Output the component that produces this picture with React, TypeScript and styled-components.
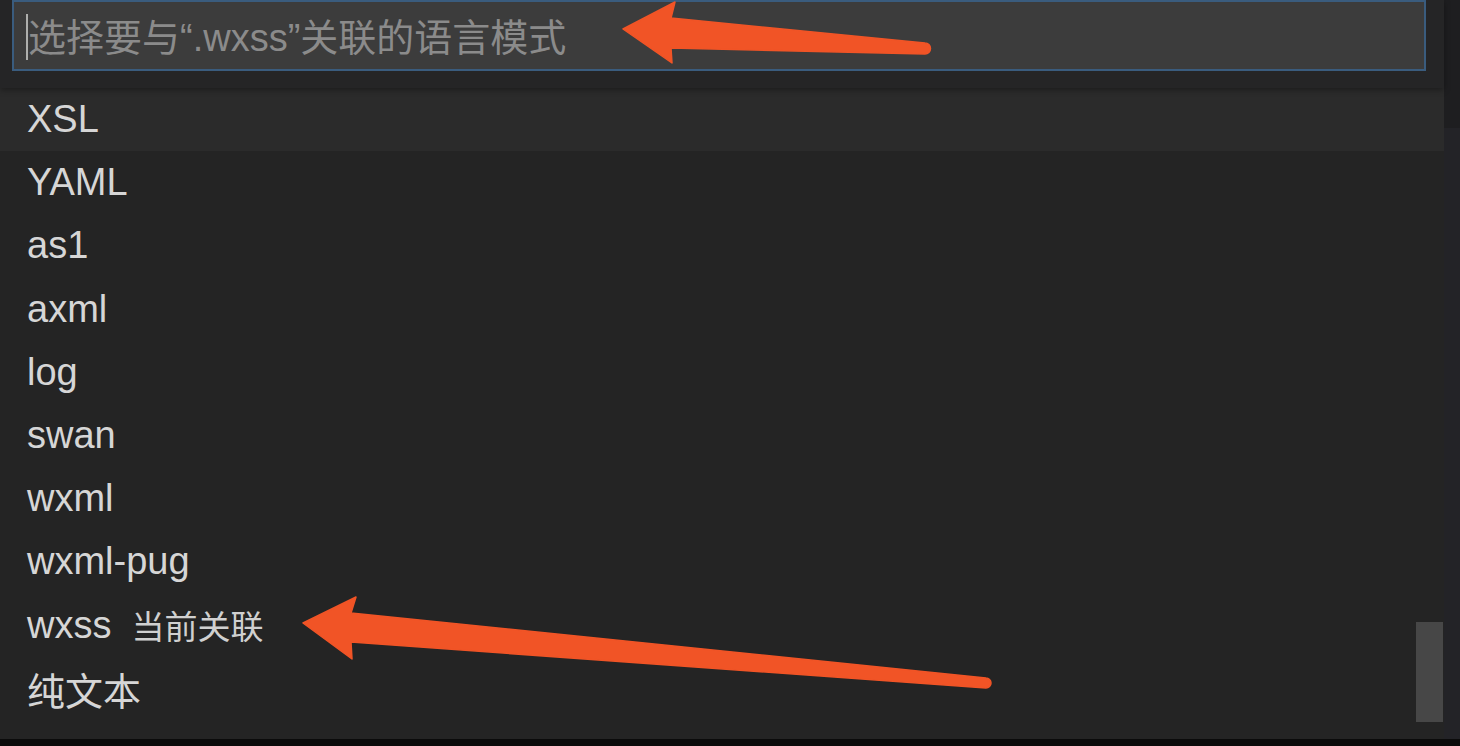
import React from 'react';
import styled, { createGlobalStyle } from 'styled-components';

const GlobalStyle = createGlobalStyle`
  html, body {
    margin: 0;
    padding: 0;
    background: #0b0b0b;
    overflow: hidden;
  }
`;

const Screen = styled.div`
  position: relative;
  width: 1460px;
  height: 746px;
  display: flex;
  flex-direction: column;
  font-family: "Liberation Sans", "Noto Sans CJK SC", sans-serif;
  background: #0b0b0b;
`;

const Main = styled.div`
  display: flex;
  flex-direction: row;
  height: 739px;
`;

const Widget = styled.div`
  position: relative;
  width: 1444px;
  display: flex;
  flex-direction: column;
  background: #242424;
`;

const SideStrip = styled.div`
  flex: 1;
  background: linear-gradient(#1e1e20 0, #1e1e20 128px, #232327 128px);
`;

const Header = styled.div`
  height: 88px;
  box-sizing: border-box;
  padding: 0 18px 0 12px;
  background: #252526;
  box-shadow: 0 2px 6px rgba(0, 0, 0, 0.35);
  position: relative;
  z-index: 1;
`;

const InputBox = styled.div`
  height: 71px;
  box-sizing: border-box;
  border: 2px solid #3a5c7e;
  background: #3c3c3c;
  display: flex;
  align-items: center;
  padding-left: 12px;
`;

const Caret = styled.span`
  display: inline-block;
  width: 2px;
  height: 46px;
  background: #aeafad;
  margin-top: 2px;
`;

const Placeholder = styled.span`
  color: #8b8b8b;
  font-size: 38px;
  line-height: 1;
  margin-top: 4px;
  white-space: nowrap;
`;

const List = styled.div`
  flex: 1;
  display: flex;
  flex-direction: column;
`;

const Row = styled.div<{ $active?: boolean }>`
  height: 63.2px;
  flex: none;
  display: flex;
  align-items: center;
  padding-left: 27px;
  background: ${(p) => (p.$active ? '#2b2b2b' : 'transparent')};
  color: #d6d6d6;
  font-size: 38px;
  white-space: nowrap;
`;

const Description = styled.span`
  margin-left: 20px;
  font-size: 33px;
  color: #d0d0d0;
`;

const ScrollThumb = styled.div`
  position: absolute;
  right: 1px;
  top: 622px;
  width: 27px;
  height: 100px;
  background: #474747;
`;

const BottomStrip = styled.div`
  flex: 1;
  background: #0b0b0b;
`;

const Annotations = styled.svg`
  position: absolute;
  left: 0;
  top: 0;
  z-index: 2;
  pointer-events: none;
`;

const ARROW = '#f15426';

const languages = [
  { name: 'XSL', active: true },
  { name: 'YAML' },
  { name: 'as1' },
  { name: 'axml' },
  { name: 'log' },
  { name: 'swan' },
  { name: 'wxml' },
  { name: 'wxml-pug' },
  { name: 'wxss', description: '当前关联' },
  { name: '纯文本' },
];

const App: React.FC = () => (
  <Screen>
    <GlobalStyle />
    <Main>
      <Widget>
        <Header>
          <InputBox>
            <Caret />
            <Placeholder>选择要与“.wxss”关联的语言模式</Placeholder>
          </InputBox>
        </Header>
        <List>
          {languages.map((lang) => (
            <Row key={lang.name} $active={lang.active}>
              {lang.name}
              {lang.description && <Description>{lang.description}</Description>}
            </Row>
          ))}
        </List>
        <ScrollThumb />
      </Widget>
      <SideStrip />
    </Main>
    <BottomStrip />
    <Annotations width="1460" height="746" viewBox="0 0 1460 746">
      <path
        d="M623 29 L675 2 L671 18 L925 43 A5.5 5.5 0 0 1 925 54 L671 48 L672 63 Z"
        fill={ARROW}
        stroke={ARROW}
        strokeWidth="1.5"
        strokeLinejoin="round"
      />
      <path
        d="M303 623 L356 597 L351 613 L986 678 A5 5 0 0 1 986 688 L351 642 L352 659 Z"
        fill={ARROW}
        stroke={ARROW}
        strokeWidth="1.5"
        strokeLinejoin="round"
      />
    </Annotations>
  </Screen>
);

export default App;
